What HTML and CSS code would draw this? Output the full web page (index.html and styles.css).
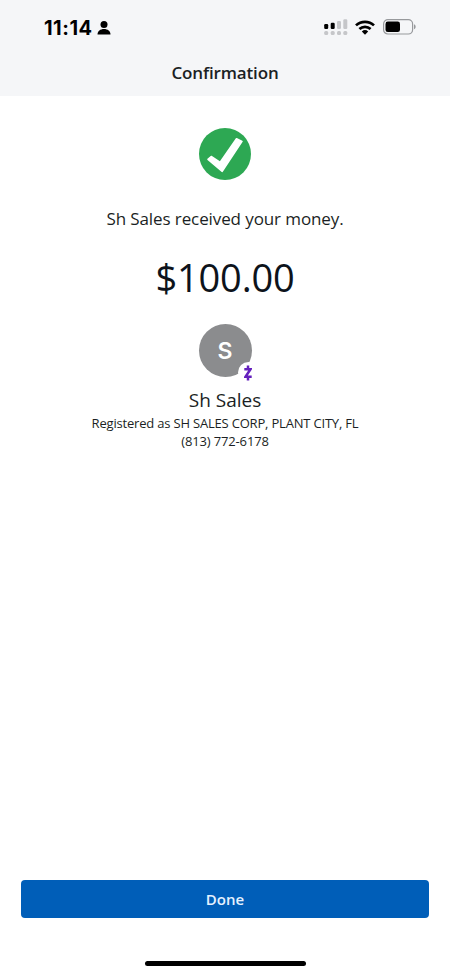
FILE: index.html
```html
<!DOCTYPE html>
<html lang="en">
<head>
<meta charset="utf-8">
<title>Confirmation</title>
<link rel="stylesheet" href="styles.css">
</head>
<body>
<div class="screen">
  <header class="header">
    <div class="status">
      <div class="status-left">
        <span class="time">11:14</span>
        <svg class="person" width="14" height="14" viewBox="0 0 14 14"><circle cx="7" cy="3.600" r="3.500"/><path d="M.5 13.400C.5 10.200 3.300 8 7 8s6.500 2.200 6.500 5.400z"/></svg>
      </div>
      <div class="status-right">
        <svg class="signal" width="24" height="18" viewBox="0 0 24 18"><g fill="#000"><rect x=".2" y="6" width="4" height="5" rx="1.200"/><rect x="6.700" y="4.700" width="4" height="6.300" rx="1.200"/></g><g fill="#c5c6c9"><rect x="13" y="3" width="4" height="8" rx="1.200"/><rect x="19.300" y="1.200" width="4" height="9.800" rx="1.200"/><rect x=".2" y="13" width="4" height="4" rx="1.500"/><rect x="6.700" y="13" width="4" height="4" rx="1.500"/><rect x="13" y="13" width="4" height="4" rx="1.500"/><rect x="19.300" y="13" width="4" height="4" rx="1.500"/></g></svg>
        <svg class="wifi" width="20" height="15" viewBox="0 0 20 15"><g fill="none" stroke="#000" stroke-width="2.700"><path d="M1 5.400a13 13 0 0 1 18 0"/><path d="M4.400 9a8.200 8.200 0 0 1 11.200 0"/></g><path d="M6.800 11.400a4.900 4.900 0 0 1 6.400 0L10 14.700z"/></svg>
        <svg class="battery" width="33" height="16" viewBox="0 0 33 16"><rect x=".6" y=".6" width="29" height="14.400" rx="4.300" fill="none" stroke="#97999c" stroke-width="1.200"/><rect x="2.500" y="2.600" width="14.500" height="10.400" rx="2.300"/><path d="M31 5.300c2.200.8 2.200 4.200 0 5z" fill="#97999c"/></svg>
      </div>
    </div>
    <h1 class="title">Confirmation</h1>
  </header>
  <main class="content">
    <svg class="check" width="52" height="52" viewBox="0 0 52 52"><circle cx="26" cy="26" r="26" fill="#2da853"/><path d="M9 31.300 12.200 28.500 21.200 34.300 37.500 10.700 43 13.400 23.200 43.300z" fill="#fff" stroke="#fff" stroke-width="1.600" stroke-linejoin="round"/></svg>
    <p class="message">Sh Sales received your money.</p>
    <p class="amount">$100.00</p>
    <div class="avatar">S
      <span class="badge"><svg width="8" height="16" viewBox="0 0 8 16"><path d="M.3 4.200h6.200L1.500 11.800h6.200M4 .6V4M4 12v3.400" fill="none" stroke="#6420bd" stroke-width="2.500"/></svg></span>
    </div>
    <h2 class="name">Sh Sales</h2>
    <p class="detail">Registered as SH SALES CORP, PLANT CITY, FL</p>
    <p class="detail phone">(813) 772-6178</p>
  </main>
  <footer class="footer">
    <button class="done">Done</button>
    <div class="home"></div>
  </footer>
</div>
</body>
</html>
```
FILE: styles.css
```css
* { box-sizing: border-box; margin: 0; padding: 0; }
body { background: #fff; color: #1b1f24; font-family: "Open Sans", sans-serif; }
svg { display: block; }
.screen { height: 975px; display: flex; flex-direction: column; overflow: hidden; }
.header { height: 96px; background: #f5f6f8; }
.status { height: 54px; padding: 0 34px 0 44px; display: flex; justify-content: space-between; align-items: center; }
.status-left { display: flex; align-items: center; gap: 5px; padding-top: 1px; }
.time { font: 700 20px/24px Inter, sans-serif; letter-spacing: 0.5px; width: 48px; white-space: nowrap; color: #000; }
.status-right { display: flex; align-items: center; }
.wifi { margin-left: 7px; }
.battery { margin-left: 8px; }
.title { font-size: 17px; line-height: 24px; font-weight: 600; letter-spacing: -0.15px; text-align: center; margin-top: 7px; }
.content { flex: 1; display: flex; flex-direction: column; align-items: center; padding-top: 32px; }
.message { font-size: 17px; line-height: 24px; letter-spacing: -0.1px; margin-top: 27px; }
.amount { font-size: 38px; line-height: 52px; letter-spacing: -0.2px; margin-top: 20px; color: #0d131b; }
.avatar { position: relative; width: 53px; height: 53px; margin-top: 21px; border-radius: 50%; background: #8b8c8e; color: #fff; font: 600 23px/54px Inter, sans-serif; text-align: center; }
.badge { position: absolute; left: 39px; top: 38px; width: 21px; height: 21px; border-radius: 50%; background: #fff; display: flex; align-items: center; justify-content: center; }
.name { font-size: 19px; line-height: 26px; font-weight: 400; margin-top: 10px; }
.detail { font-size: 13px; line-height: 18.500px; letter-spacing: -0.19px; margin-top: 0.500px; }
.phone { letter-spacing: -0.15px; margin-top: 0; }
.footer { padding: 0 21px 9px; display: flex; flex-direction: column; align-items: center; }
.done { width: 100%; height: 38px; border: 0; border-radius: 4px; background: #005eb8; color: #e6f2ff; font: 600 15px/38px "Open Sans", sans-serif; }
.home { width: 161px; height: 5px; margin-top: 43px; border-radius: 3px; background: #000; }
```
